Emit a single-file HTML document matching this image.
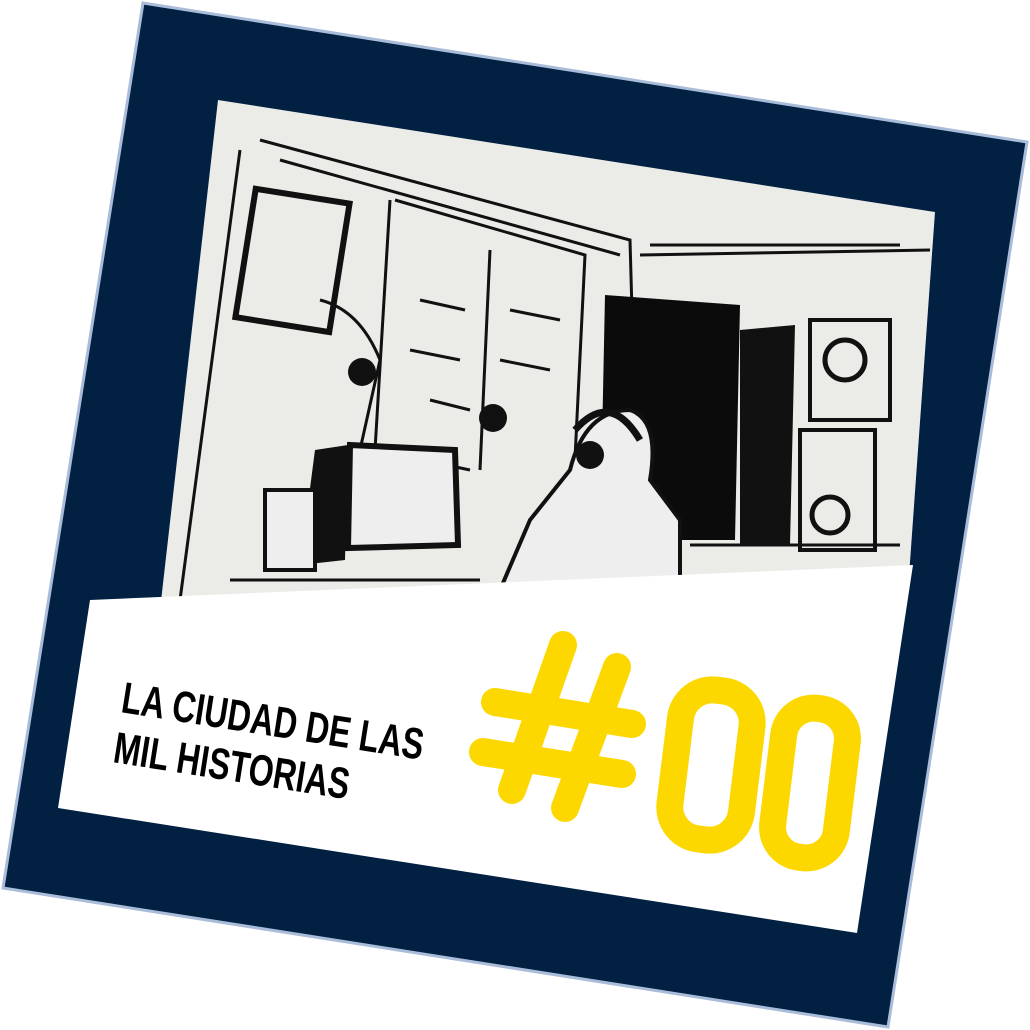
<!DOCTYPE html>
<html><head><meta charset="utf-8"><style>html,body{margin:0;padding:0;background:#fff;width:1030px;height:1030px;overflow:hidden}</style></head>
<body>
<svg width="1030" height="1030" viewBox="0 0 1030 1030" xmlns="http://www.w3.org/2000/svg">
<polygon points="143,3 1027,142 888,1027 3,888" fill="#012042" stroke="#a9bcd9" stroke-width="3"/>
<polygon points="218,100 935,212 908,590 160,610" fill="#ebebe8"/>
<g stroke="#111" fill="none" stroke-width="3">
<path d="M260,140 L630,240 L640,600"/>
<path d="M240,150 L180,600"/>
<path d="M280,160 L620,255"/>
<path d="M640,255 L930,250"/>
<path d="M650,245 L900,245"/>
<rect x="245" y="195" width="95" height="130" transform="rotate(9 290 260)" stroke-width="6"/>
<path d="M395,200 L585,255 L570,560"/>
<path d="M390,200 L375,450 L470,470"/>
<path d="M490,250 L480,470"/>
<path d="M420,300 L465,310 M410,350 L460,360 M430,400 L470,410 M510,310 L560,320 M500,360 L550,370"/>
<rect x="810" y="320" width="80" height="100" stroke-width="4"/>
<circle cx="845" cy="360" r="20" stroke-width="5"/>
<rect x="800" y="430" width="75" height="120" stroke-width="4"/>
<circle cx="830" cy="515" r="18" stroke-width="5"/>
<path d="M320,300 Q360,310 380,360 L360,450"/>
<path d="M230,580 L480,580 M690,545 L900,545"/>
</g>
<polygon points="605,295 740,305 735,540 600,540" fill="#0b0b0b"/>
<polygon points="740,330 795,325 790,545 740,545" fill="#111"/>
<polygon points="350,445 455,450 458,545 348,548" fill="#eee" stroke="#111" stroke-width="6"/>
<polygon points="315,450 348,445 345,560 300,565" fill="#111"/>
<path d="M570,470 Q585,410 630,410 Q660,420 650,480 L680,520 L680,590 L500,590 L530,520 Z" fill="#eee" stroke="#111" stroke-width="4"/>
<path d="M575,430 Q610,390 640,440" stroke="#111" stroke-width="7" fill="none"/>
<circle cx="590" cy="455" r="14" fill="#111"/>
<circle cx="493" cy="418" r="14" fill="#111"/>
<circle cx="362" cy="372" r="14" fill="#111"/>
<rect x="265" y="490" width="50" height="80" fill="#eee" stroke="#111" stroke-width="4"/>
<polygon points="90,600 913,565 857,933 58,808" fill="#fff"/>
<g font-family="Liberation Sans, sans-serif" font-weight="bold" fill="#000" font-size="44">
<text x="120" y="712" transform="rotate(9 120 712)" textLength="305" lengthAdjust="spacingAndGlyphs">LA CIUDAD DE LAS</text>
<text x="112" y="762" transform="rotate(9 112 762)" textLength="238" lengthAdjust="spacingAndGlyphs">MIL HISTORIAS</text>
</g>
<g stroke="#fdd800" stroke-linecap="round" fill="none" stroke-width="28">
<path d="M563,645 L512,790"/>
<path d="M617,667 L565,808"/>
<path d="M495,702 L632,724"/>
<path d="M483,752 L622,774"/>
<rect x="675" y="690" width="72" height="150" rx="32" transform="rotate(7 711 765)" stroke-width="27"/>
<rect x="778" y="708" width="64" height="150" rx="30" transform="rotate(7 810 783)" stroke-width="27"/>
</g>
</svg>
</body></html>
